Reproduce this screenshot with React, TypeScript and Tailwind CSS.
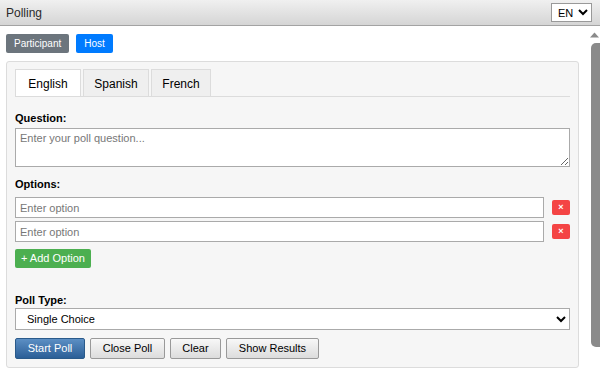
import { useState } from 'react';

const font = { fontFamily: '"Liberation Sans", Arial, sans-serif' };

const tabs = ['English', 'Spanish', 'French'];

const grayBtn =
  'h-[21px] rounded-[2px] border border-[#999] bg-gradient-to-b from-[#f8f8f8] to-[#dcdcdc] text-black text-[11px] leading-none';

const App = () => {
  const [active, setActive] = useState('English');
  const [options, setOptions] = useState(['', '']);

  return (
    <div className="h-screen flex flex-col bg-white text-[#222] overflow-hidden" style={font}>
      <div className="h-[26px] shrink-0 flex items-center justify-between pl-[6px] pr-[8px] bg-gradient-to-b from-[#f0f0f0] to-[#d5d5d5] border-b border-[#a3a3a3]">
        <span className="text-[12px] text-[#2a2a2a]">Polling</span>
        <select className="h-[19px] w-[41px] text-[11px] border border-[#999] bg-white px-[2px] text-black">
          <option>EN</option>
          <option>ES</option>
          <option>FR</option>
        </select>
      </div>

      <div className="flex-1 flex min-h-0">
        <div className="flex-1 overflow-hidden">
          <div className="px-[6px] pt-[8px] pb-[24px]">
            <div className="flex gap-[7px]">
              <button className="h-[19px] px-[8px] rounded-[2px] bg-[#6c757d] text-white text-[10px] leading-none">Participant</button>
              <button className="h-[19px] px-[8px] rounded-[2px] bg-[#007bff] text-white text-[10px] leading-none">Host</button>
            </div>

            <div className="mt-[8px] border border-[#dcdcdc] rounded-[3px] bg-[#f6f6f6] px-[8px] pt-[7px] pb-[8px]">
              <div className="flex gap-[2px] border-b border-[#dcdcdc]">
                {tabs.map((t) => (
                  <button
                    key={t}
                    onClick={() => setActive(t)}
                    className={`h-[27px] pt-[2px] border border-b-0 border-[#dcdcdc] text-[12px] leading-none text-black ${
                      t === 'French' ? 'w-[60px]' : 'w-[66px]'
                    } ${active === t ? 'bg-white' : 'bg-[#efefef]'}`}
                  >
                    {t}
                  </button>
                ))}
              </div>

              <div className="mt-[14px] text-[11px] leading-[14px] font-bold text-black">Question:</div>
              <textarea
                placeholder="Enter your poll question..."
                className="mt-[3px] block w-full h-[39px] border border-[#aaa] bg-white px-[4px] py-[2px] text-[11px] leading-[14px] placeholder:text-[#777]"
              />

              <div className="mt-[10px] text-[11px] leading-[14px] font-bold text-black">Options:</div>
              <div className="mt-[6px] flex flex-col gap-[3px]">
                {options.map((o, i) => (
                  <div key={i} className="flex items-center gap-[8px]">
                    <input
                      value={o}
                      onChange={(e) => setOptions(options.map((x, j) => (j === i ? e.target.value : x)))}
                      placeholder="Enter option"
                      className="flex-1 h-[21px] border border-[#aaa] bg-white px-[4px] text-[11px] placeholder:text-[#777]"
                    />
                    <button className="w-[18px] h-[15px] rounded-[2px] bg-[#f44444] text-white text-[9px] font-bold leading-none flex items-center justify-center">
                      ×
                    </button>
                  </div>
                ))}
              </div>
              <button
                onClick={() => setOptions([...options, ''])}
                className="mt-[7px] h-[19px] px-[6px] rounded-[2px] bg-[#4caf50] text-white text-[11px] leading-none"
              >
                + Add Option
              </button>

              <div className="mt-[24px] text-[11px] leading-[14px] font-bold text-black">Poll Type:</div>
              <select className="mt-[1px] block w-full h-[22px] border border-[#aaa] bg-white px-[7px] text-[11px] text-black">
                <option>Single Choice</option>
                <option>Multiple Choice</option>
              </select>

              <div className="mt-[8px] flex gap-[5px]">
                <button className="h-[21px] w-[70px] rounded-[2px] border border-[#2a5a8a] bg-gradient-to-b from-[#5c8fc4] to-[#2b5f97] text-white text-[11px] leading-none">
                  Start Poll
                </button>
                <button className={`${grayBtn} w-[75px]`}>Close Poll</button>
                <button className={`${grayBtn} w-[51px]`}>Clear</button>
                <button className={`${grayBtn} w-[93px]`}>Show Results</button>
              </div>
            </div>
          </div>
        </div>

        {/* scrollbar */}
        <div className="w-[15px] shrink-0 bg-white flex flex-col pt-[5px] pb-[22px]">
          <svg width="15" height="7" viewBox="0 0 15 7" className="shrink-0">
            <path d="M5 6.5 L9.5 1.5 L14 6.5 Z" fill="#8a8a8a" />
          </svg>
          <div className="mt-[5px] ml-[6px] flex-1 bg-[#8a8a8a] rounded-l-[5px]" />
        </div>
      </div>
    </div>
  );
};

export default App;
